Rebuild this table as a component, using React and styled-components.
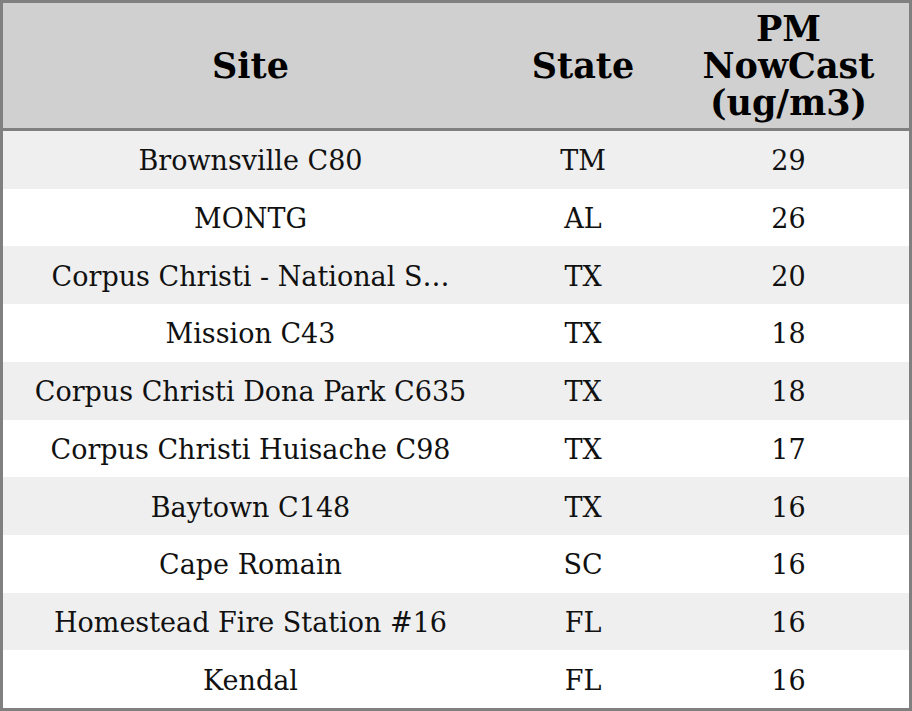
import React from 'react';
import styled, { createGlobalStyle } from 'styled-components';

const GlobalStyle = createGlobalStyle`
  html, body {
    margin: 0;
    padding: 0;
    background: #ffffff;
  }
  body {
    font-family: 'DejaVu Serif', serif;
  }
`;

const StyledTable = styled.div`
  width: 912px;
  height: 711px;
  box-sizing: border-box;
  border: 3px solid #808080;
  display: grid;
  grid-template-columns: 495px 170px 1fr;
  grid-template-rows: 128px repeat(10, 1fr);
  color: #111111;
`;

const StyledHeadCell = styled.div`
  display: flex;
  align-items: center;
  justify-content: center;
  text-align: center;
  background-color: #d0d0d0;
  border-bottom: 3px solid #808080;
  font-size: 35px;
  font-weight: 700;
  line-height: 37px;
  color: #000000;
`;

const StyledCell = styled.div`
  display: flex;
  align-items: center;
  justify-content: center;
  padding-top: 2px;
  background-color: ${({ $odd }) => ($odd ? '#efefef' : '#ffffff')};
  font-size: 27px;
  white-space: nowrap;
  overflow: hidden;
`;

const rows = [
  ['Brownsville C80', 'TM', 29],
  ['MONTG', 'AL', 26],
  ['Corpus Christi - National S…', 'TX', 20],
  ['Mission C43', 'TX', 18],
  ['Corpus Christi Dona Park C635', 'TX', 18],
  ['Corpus Christi Huisache C98', 'TX', 17],
  ['Baytown C148', 'TX', 16],
  ['Cape Romain', 'SC', 16],
  ['Homestead Fire Station #16', 'FL', 16],
  ['Kendal', 'FL', 16],
];

const App = () => {
  return (
    <>
      <GlobalStyle />
      <StyledTable>
        <StyledHeadCell>Site</StyledHeadCell>
        <StyledHeadCell>State</StyledHeadCell>
        <StyledHeadCell>
          PM
          <br />
          NowCast
          <br />
          (ug/m3)
        </StyledHeadCell>
        {rows.map(([site, state, value], i) => (
          <React.Fragment key={site}>
            <StyledCell $odd={i % 2 === 0}>{site}</StyledCell>
            <StyledCell $odd={i % 2 === 0}>{state}</StyledCell>
            <StyledCell $odd={i % 2 === 0}>{value}</StyledCell>
          </React.Fragment>
        ))}
      </StyledTable>
    </>
  );
};

export default App;
